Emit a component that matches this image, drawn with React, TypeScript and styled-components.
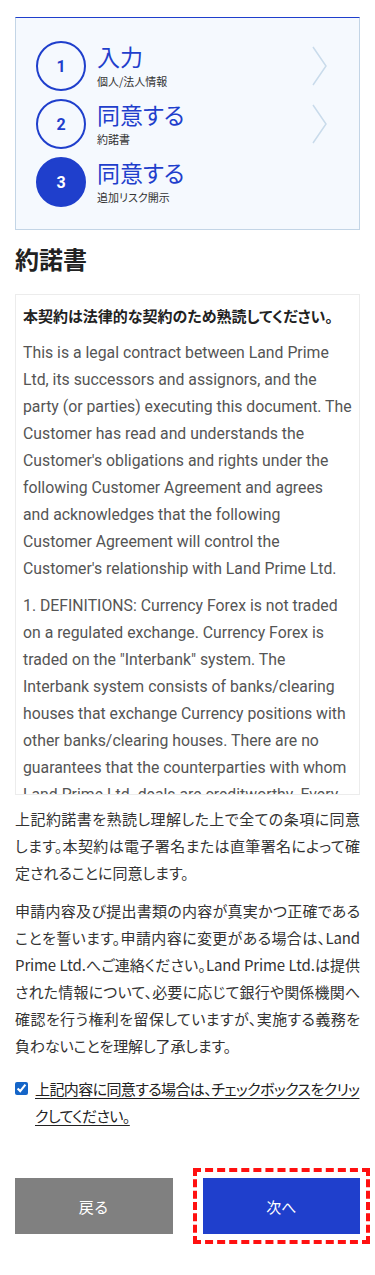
import React from "react";
import styled, { createGlobalStyle } from "styled-components";

const BLUE = "#1f3fcc";

const Global = createGlobalStyle`
  html, body { margin: 0; padding: 0; background: #fff; }
  body { font-family: Roboto, "Noto Sans CJK JP", sans-serif; color: #333; }
  * { box-sizing: border-box; }
`;

const Page = styled.div`
  width: 375px;
  padding: 17px 15px 30px;
`;

const Stepper = styled.div`
  background: #f5f9fe;
  border: 1px solid #c3d5e6;
  border-top: 1px solid ${BLUE};
  padding: 23px 20px 22px;
  display: flex;
  flex-direction: column;
  gap: 8px;
`;

const StepRow = styled.div`
  display: flex;
  align-items: center;
  height: 50px;
`;

const Circle = styled.div<{ $active?: boolean }>`
  flex: 0 0 50px;
  width: 50px;
  height: 50px;
  border-radius: 50%;
  border: 2px solid ${BLUE};
  background: ${(p) => (p.$active ? BLUE : "transparent")};
  color: ${(p) => (p.$active ? "#fff" : BLUE)};
  display: flex;
  align-items: center;
  justify-content: center;
  font-family: Roboto, sans-serif;
  font-weight: 700;
  font-size: 16px;
`;

const StepText = styled.div`
  flex: 1;
  margin-left: 11px;
  display: flex;
  flex-direction: column;
`;

const StepTitle = styled.div`
  font-family: "Noto Sans CJK JP", sans-serif;
  font-feature-settings: "palt";
  font-size: 23px;
  font-weight: 400;
  line-height: 24px;
  color: ${BLUE};
`;

const StepSub = styled.div`
  margin-top: 6px;
  font-family: "Noto Sans CJK JP", sans-serif;
  font-feature-settings: "palt";
  font-size: 11px;
  line-height: 14px;
  color: #333;
`;

const Chevron = styled.svg`
  flex: 0 0 auto;
  margin-right: 12px;
`;

const Heading = styled.h2`
  margin: 11px 0 17px;
  font-family: "Noto Sans CJK JP", sans-serif;
  font-size: 24px;
  line-height: 36px;
  font-weight: 700;
  color: #222;
`;

const ContractBox = styled.div`
  height: 501px;
  border: 1px solid #ececec;
  padding: 7px 7px 0;
  overflow-y: auto;
  scrollbar-width: none;
  &::-webkit-scrollbar { display: none; }
`;

const ContractLead = styled.p`
  margin: 0 0 10px;
  font-family: "Noto Sans CJK JP", sans-serif;
  font-feature-settings: "palt";
  font-weight: 700;
  font-size: 15px;
  line-height: 27px;
  color: #222;
`;

const ContractPara = styled.p`
  margin: 0 0 10px;
  font-family: Roboto, sans-serif;
  font-size: 15.8px;
  line-height: 27px;
  color: #555;
`;

const Notice = styled.p<{ $tracking?: number }>`
  margin: 10px 0 11px;
  font-family: "Noto Sans CJK JP", sans-serif;
  font-feature-settings: "palt";
  font-size: 15px;
  letter-spacing: ${(p) => p.$tracking ?? 0}px;
  line-height: 27px;
  text-align: justify;
  color: #333;
`;

const AgreeRow = styled.label`
  display: flex;
  align-items: flex-start;
  margin-top: 16px;
  cursor: pointer;
`;

const Check = styled.input`
  flex: 0 0 auto;
  width: 13px;
  height: 13px;
  margin: 7px 7px 0 0;
  accent-color: #1565c8;
`;

const AgreeText = styled.span`
  font-family: "Noto Sans CJK JP", sans-serif;
  font-feature-settings: "palt";
  font-size: 15px;
  letter-spacing: -0.6px;
  line-height: 27px;
  color: #222;
  text-decoration: underline;
  text-underline-offset: 3px;
`;

const Buttons = styled.div`
  display: grid;
  grid-template-columns: 1fr 1fr;
  gap: 30px;
  margin-top: 49px;
`;

const Btn = styled.button<{ $primary?: boolean }>`
  height: 56px;
  border: none;
  background: ${(p) => (p.$primary ? BLUE : "#808080")};
  color: #fff;
  font-family: "Noto Sans CJK JP", sans-serif;
  font-size: 15px;
  cursor: pointer;
  ${(p) =>
    p.$primary
      ? `outline: 4px dashed #ff1010; outline-offset: 6px;`
      : ""}
`;

const ChevronIcon = () => (
  <Chevron width="15" height="40" viewBox="0 0 15 40">
    <path d="M1 1 L14 20 L1 39" fill="none" stroke="#c9dbeb" strokeWidth="1.5" />
  </Chevron>
);

const steps = [
  { n: "1", title: "入力", sub: "個人/法人情報", arrow: true, active: false },
  { n: "2", title: "同意する", sub: "約諾書", arrow: true, active: false },
  { n: "3", title: "同意する", sub: "追加リスク開示", arrow: false, active: true },
];

export default function App() {
  return (
    <>
      <Global />
      <Page>
        <Stepper>
          {steps.map((s) => (
            <StepRow key={s.n}>
              <Circle $active={s.active}>{s.n}</Circle>
              <StepText>
                <StepTitle>{s.title}</StepTitle>
                <StepSub>{s.sub}</StepSub>
              </StepText>
              {s.arrow && <ChevronIcon />}
            </StepRow>
          ))}
        </Stepper>

        <Heading>約諾書</Heading>

        <ContractBox>
          <ContractLead>本契約は法律的な契約のため熟読してください。</ContractLead>
          <ContractPara>
            This is a legal contract between Land Prime Ltd, its successors and assignors, and the
            party (or parties) executing this document. The Customer has read and understands the
            Customer's obligations and rights under the following Customer Agreement and agrees and
            acknowledges that the following Customer Agreement will control the Customer's
            relationship with Land Prime Ltd.
          </ContractPara>
          <ContractPara>
            1. DEFINITIONS: Currency Forex is not traded on a regulated exchange. Currency Forex is
            traded on the "Interbank" system. The Interbank system consists of banks/clearing houses
            that exchange Currency positions with other banks/clearing houses. There are no
            guarantees that the counterparties with whom Land Prime Ltd. deals are creditworthy. Every
            Forex transaction entered into by the Customer is subject to the risk that the
            counterparty may fail to perform its obligations.
          </ContractPara>
          <ContractPara>
            2. RISK ACKNOWLEDGMENT: The Customer acknowledges that trading in Currency Forex involves a
            high degree of risk and may result in the loss of all funds deposited.
          </ContractPara>
        </ContractBox>

        <Notice $tracking={0}>
          上記約諾書を熟読し理解した上で全ての条項に同意します。本契約は電子署名または直筆署名によって確定されることに同意します。
        </Notice>
        <Notice $tracking={-0.12}>
          申請内容及び提出書類の内容が真実かつ正確であることを誓います。申請内容に変更がある場合は、Land
          Prime Ltd.へご連絡ください。Land Prime Ltd.は提供された情報について、必要に応じて銀行や関係機関へ確認を行う権利を留保していますが、実施する義務を負わないことを理解し了承します。
        </Notice>

        <AgreeRow>
          <Check type="checkbox" defaultChecked />
          <AgreeText>上記内容に同意する場合は、チェックボックスをクリックしてください。</AgreeText>
        </AgreeRow>

        <Buttons>
          <Btn type="button">戻る</Btn>
          <Btn type="button" $primary>
            次へ
          </Btn>
        </Buttons>
      </Page>
    </>
  );
}
